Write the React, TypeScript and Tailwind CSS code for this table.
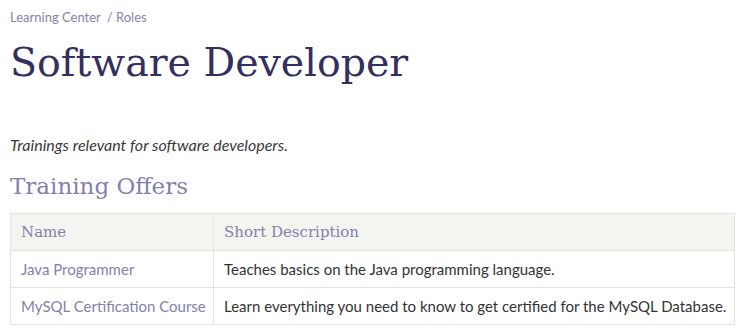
const rows = [
  { name: 'Java Programmer', desc: 'Teaches basics on the Java programming language.' },
  { name: 'MySQL Certification Course', desc: 'Learn everything you need to know to get certified for the MySQL Database.' },
]

const serif = "font-['DejaVu_Serif',serif]"

export default function App() {
  return (
    <div className="min-h-[332px] bg-white px-[10px] pt-[8px] font-['Lato',sans-serif] text-[#3a3a3a]">
      <nav className="text-[13px] leading-[18px] text-[#8484a8]">
        <a>Learning Center</a>
        <span className="ml-[6px]">/ Roles</span>
      </nav>
      <h1 className={`${serif} mt-[12px] text-[39.5px] leading-[48px] text-[#332f5e]`}>Software Developer</h1>
      <p className="mt-[49px] text-[16px] italic leading-[20px] text-[#3a3a3a]">Trainings relevant for software developers.</p>
      <h2 className={`${serif} mt-[16px] text-[23px] leading-[30px] text-[#8282aa]`}>Training Offers</h2>
      <table className="mt-[12px] w-[725px] table-fixed border-collapse border border-[#e3e4da] text-[15px]">
        <thead>
          <tr className="h-[37px] bg-[#f4f5f0]">
            <th className={`${serif} w-[203px] border border-[#e3e4da] px-[10px] text-left text-[15px] font-normal text-[#8282aa]`}>Name</th>
            <th className={`${serif} border border-[#e3e4da] px-[10px] text-left text-[15px] font-normal text-[#8282aa]`}>Short Description</th>
          </tr>
        </thead>
        <tbody>
          {rows.map((r) => (
            <tr key={r.name} className="h-[37px]">
              <td className="whitespace-nowrap border border-[#e3e4da] px-[10px] text-[#8282aa]">{r.name}</td>
              <td className="whitespace-nowrap border border-[#e3e4da] px-[10px] text-[#333]">{r.desc}</td>
            </tr>
          ))}
        </tbody>
      </table>
    </div>
  )
}
